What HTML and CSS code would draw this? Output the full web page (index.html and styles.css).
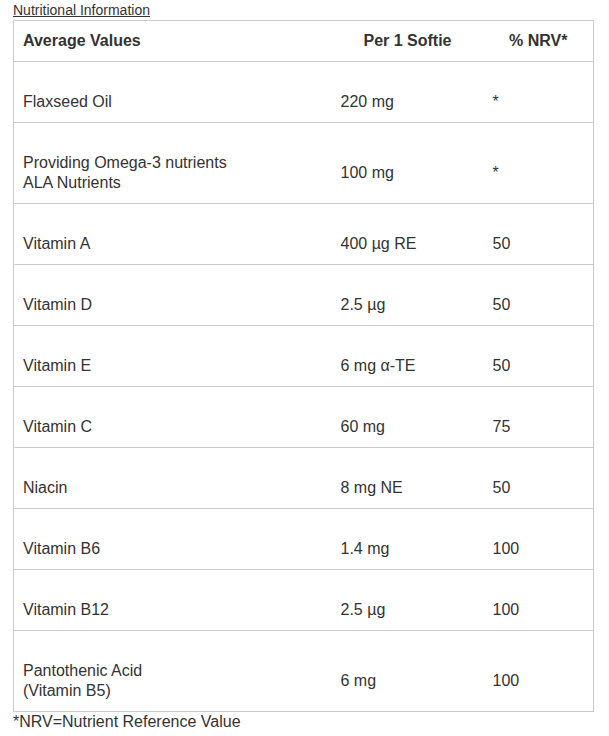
FILE: index.html
```html
<!DOCTYPE html>
<html lang="en">
<head>
<meta charset="utf-8">
<title>Nutritional Information</title>
<link rel="stylesheet" href="styles.css">
</head>
<body>
<div class="wrap">
  <div class="title">Nutritional Information</div>
  <table class="nutri">
    <colgroup>
      <col class="c1"><col class="c2"><col class="c3">
    </colgroup>
    <thead>
      <tr><th class="name">Average Values</th><th>Per 1 Softie</th><th>% NRV*</th></tr>
    </thead>
    <tbody>
      <tr><td>Flaxseed Oil</td><td>220 mg</td><td>*</td></tr>
      <tr><td>Providing Omega-3 nutrients<br>ALA Nutrients</td><td>100 mg</td><td>*</td></tr>
      <tr><td>Vitamin A</td><td>400 µg RE</td><td>50</td></tr>
      <tr><td>Vitamin D</td><td>2.5 µg</td><td>50</td></tr>
      <tr><td>Vitamin E</td><td>6 mg α-TE</td><td>50</td></tr>
      <tr><td>Vitamin C</td><td>60 mg</td><td>75</td></tr>
      <tr><td>Niacin</td><td>8 mg NE</td><td>50</td></tr>
      <tr><td>Vitamin B6</td><td>1.4 mg</td><td>100</td></tr>
      <tr><td>Vitamin B12</td><td>2.5 µg</td><td>100</td></tr>
      <tr><td>Pantothenic Acid<br>(Vitamin B5)</td><td>6 mg</td><td>100</td></tr>
    </tbody>
  </table>
  <div class="foot">*NRV=Nutrient Reference Value</div>
</div>
</body>
</html>
```
FILE: styles.css
```css
html, body {
  margin: 0;
  padding: 0;
  background: #fff;
}
body {
  font-family: "Liberation Sans", Arial, sans-serif;
  color: #333;
}
.wrap {
  padding: 0 0 0 13px;
}
.title {
  font-size: 14px;
  line-height: 20px;
  text-decoration: underline;
  color: #333;
}
.nutri {
  border-collapse: collapse;
  width: 580px;
  table-layout: fixed;
  font-size: 16px;
  line-height: 20px;
  border: 1px solid #ccc;
}
.c1 { width: 318px; }
.c2 { width: 152px; }
.c3 { width: 110px; }
.nutri th {
  font-weight: bold;
  text-align: center;
  padding: 10px 10px;
  border-bottom: 1px solid #ccc;
}
.nutri th.name {
  text-align: left;
  padding-left: 9px;
}
.nutri td {
  padding: 30px 11px 10px 9px;
  vertical-align: middle;
  border-bottom: 1px solid #ccc;
  text-align: left;
}
.foot {
  font-size: 16px;
  line-height: 20px;
}
```
